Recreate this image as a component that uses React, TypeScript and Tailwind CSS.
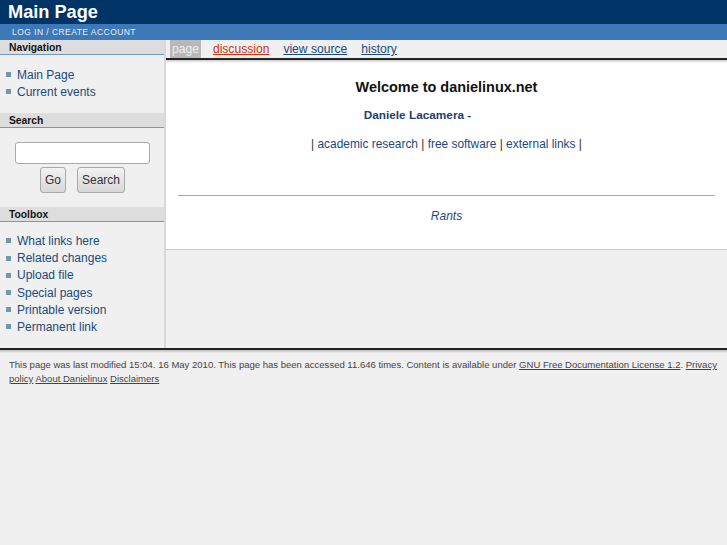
const sans = "font-['Liberation_Sans',Arial,sans-serif]";

function SideHead({ children }: { children: string }) {
  return (
    <div className="h-[15px] bg-[#dddddd] border-b border-[#6a9bcb] pl-[9px] text-[10.3px] leading-[16px] font-bold text-[#111111]">
      {children}
    </div>
  );
}

function SideList({ items }: { items: string[] }) {
  return (
    <ul className="flex flex-col">
      {items.map((t) => (
        <li key={t} className="h-[17.2px] flex items-center text-[12px] text-[#1b4a7c]">
          <span className="w-[5px] h-[5px] bg-[#6f97ad] ml-[6px] mr-[6px] shrink-0" />
          {t}
        </li>
      ))}
    </ul>
  );
}

function Btn({ children, w }: { children: string; w: string }) {
  return (
    <div className={`${w} h-[26px] rounded-[3px] border border-[#aaaaaa] bg-gradient-to-b from-[#f2f2f2] to-[#d8d8d8] flex items-center justify-center text-[12px] text-[#333333]`}>
      {children}
    </div>
  );
}

function Tab({ children, color }: { children: string; color: string }) {
  return <span className={`text-[12.1px] underline leading-[18px] ${color}`}>{children}</span>;
}

export default function App() {
  return (
    <div className={`${sans} w-[727px] h-[545px] bg-[#f0f0f0] overflow-hidden flex flex-col`}>
      <div className="h-[24px] bg-[#003366] pl-[8px] text-[18.2px] leading-[25px] font-bold text-white">Main Page</div>
      <div className="h-[16px] bg-[#3d79b8] pl-[12px] text-[8.5px] leading-[17px] tracking-[0.45px] text-[#e8eef6]">
        LOG IN / CREATE ACCOUNT
      </div>
      <div className="flex h-[308px]">
        <div className="w-[166px] shrink-0 border-r-2 border-[#d8d8d8] bg-[#f0f0f0]">
          <SideHead>Navigation</SideHead>
          <div className="pt-[11px] pb-[13px]">
            <SideList items={["Main Page", "Current events"]} />
          </div>
          <SideHead>Search</SideHead>
          <div className="pt-[14px] flex flex-col items-center">
            <div className="w-[135px] h-[22px] bg-white border border-[#aaaaaa] rounded-[3px]" />
            <div className="flex gap-[11px] mt-[3px] ml-[1px]">
              <Btn w="w-[26px]">Go</Btn>
              <Btn w="w-[48px]">Search</Btn>
            </div>
          </div>
          <div className="mt-[14px]">
            <SideHead>Toolbox</SideHead>
          </div>
          <div className="pt-[10px]">
            <SideList items={["What links here", "Related changes", "Upload file", "Special pages", "Printable version", "Permanent link"]} />
          </div>
        </div>
        <div className="flex-1 flex flex-col min-w-0">
          <div className="h-[18px] flex pl-[4px] bg-[#f0f0f0]">
            <span className="bg-[#b8b8b8] text-[#eeeeee] text-[12.1px] leading-[18px] px-[2px] mr-[12px]">page</span>
            <span className="mr-[14px] flex"><Tab color="text-[#cc3311]">discussion</Tab></span>
            <span className="mr-[14px] flex"><Tab color="text-[#1b4a7c]">view source</Tab></span>
            <Tab color="text-[#1b4a7c]">history</Tab>
          </div>
          <div className="h-[2px] bg-[#222222]" />
          <div className="h-[190px] bg-white border-b border-[#cccccc] flex flex-col">
            <div className="h-[3px] bg-gradient-to-b from-[#c8c8c8] to-white" />
            <div className="px-[12px] flex flex-col items-center">
              <div className="mt-[15px] text-[14.45px] leading-[18px] font-bold text-[#111111]">Welcome to danielinux.net</div>
              <div className="mt-[11px] text-[11.8px] leading-[16px] font-bold text-[#1b3f6e] mr-[58px]">Daniele Lacamera -</div>
              <div className="mt-[13px] text-[11.9px] leading-[16px] text-[#333333]">
                | <span className="text-[#1b4a7c]">academic research</span> | <span className="text-[#1b4a7c]">free software</span> | <span className="text-[#1b4a7c]">external links</span> |
              </div>
              <div className="w-full h-0 border-t border-[#aaaaaa] mt-[43px]" />
              <div className="mt-[12px] text-[12px] leading-[16px] italic text-[#1b4a7c]">Rants</div>
            </div>
          </div>
        </div>
      </div>
      <div className="h-[2px] bg-[#222222]" />
      <div className="h-[3px] bg-gradient-to-b from-[#bbbbbb] to-[#f0f0f0]" />
      <div className="px-[9px] pt-[5px] text-[9.53px] leading-[14px] text-[#444444]">
        This page was last modified 15:04. 16 May 2010. This page has been accessed 11.646 times. Content is available under <span className="underline">GNU Free Documentation License 1.2</span>. <span className="underline">Privacy policy</span> <span className="underline">About Danielinux</span> <span className="underline">Disclaimers</span>
      </div>
    </div>
  );
}
